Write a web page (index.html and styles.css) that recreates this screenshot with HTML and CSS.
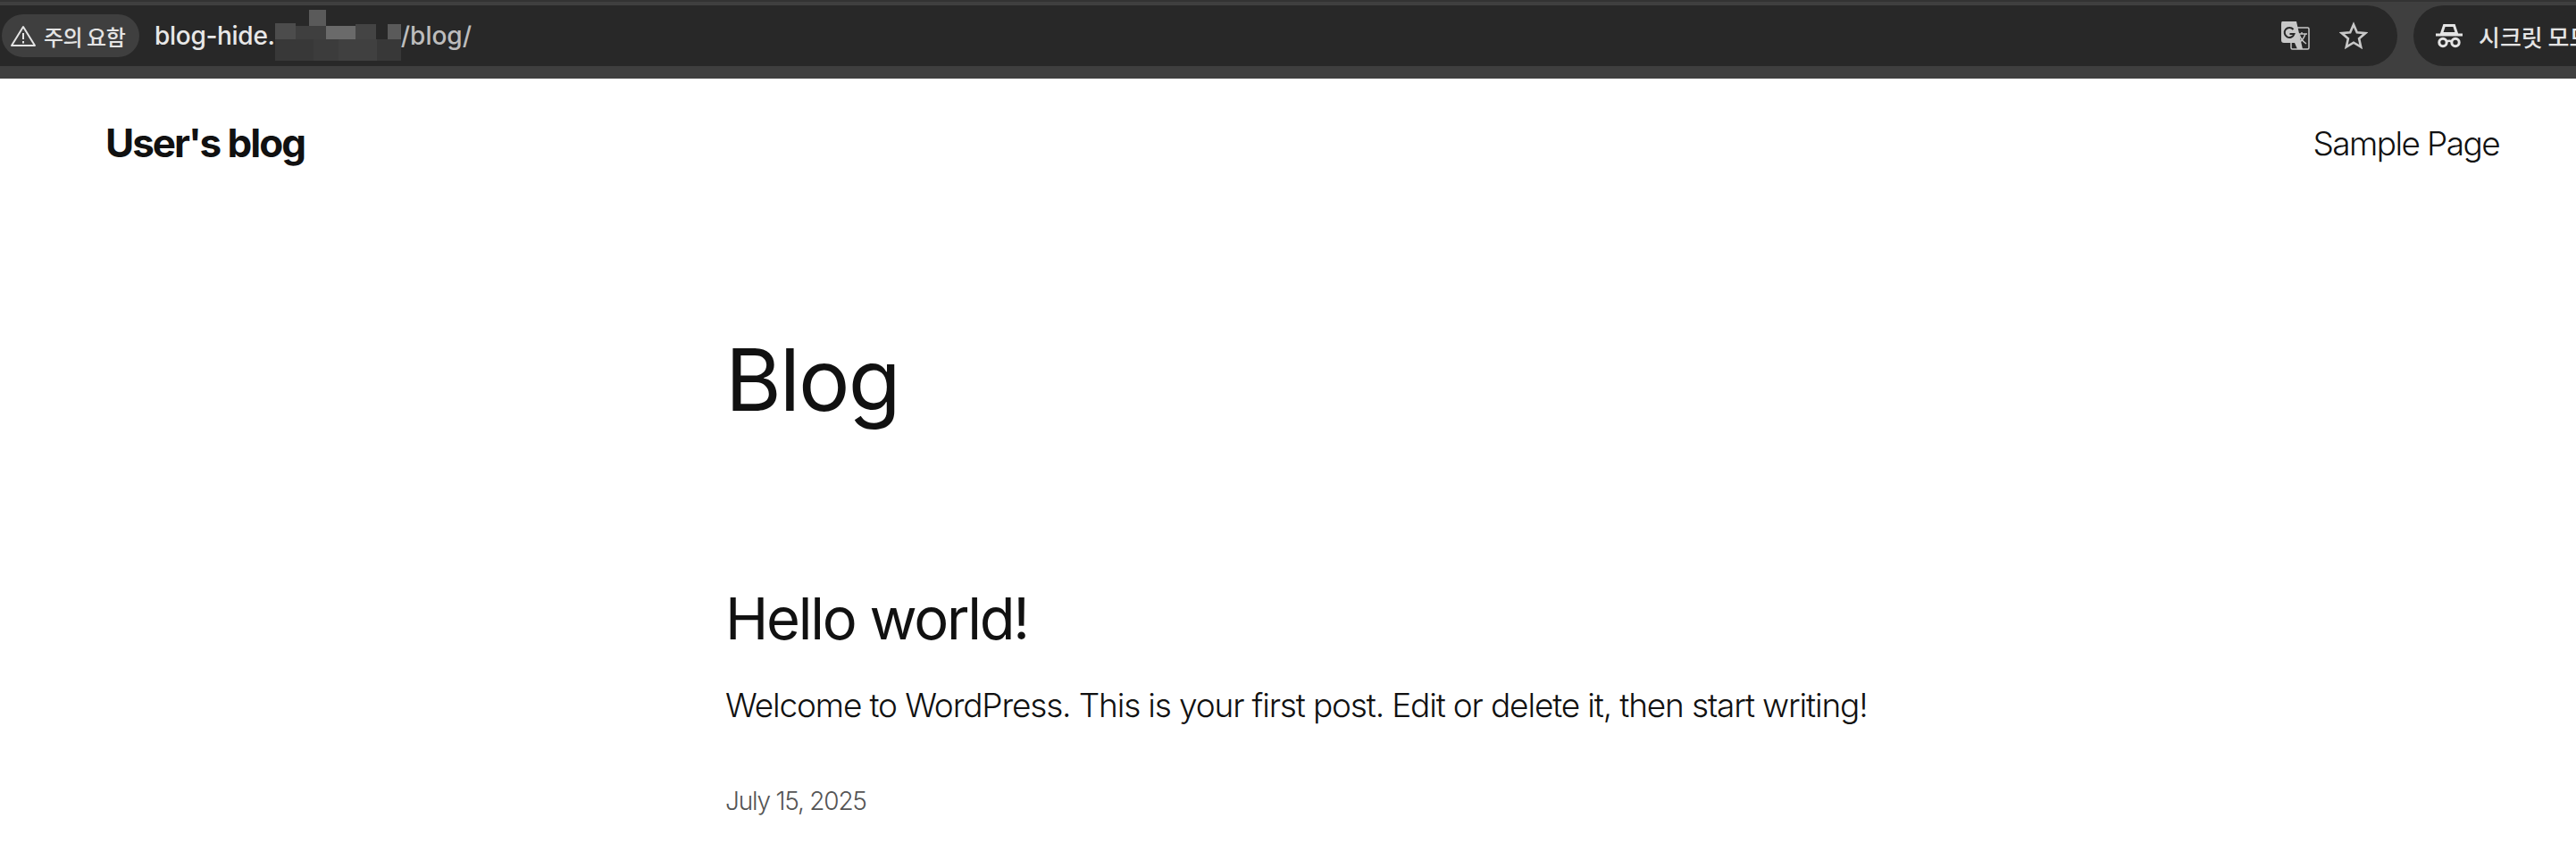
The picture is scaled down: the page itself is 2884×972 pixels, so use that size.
FILE: index.html
```html
<!DOCTYPE html>
<html lang="en">
<head>
<meta charset="utf-8">
<title>Blog</title>
<link rel="stylesheet" href="styles.css">
</head>
<body>
<div class="toolbar">
  <div class="omnibox">
    <div class="chip">
      <svg class="warn" viewBox="0 0 30 26" width="30" height="26"><path d="M15 3 L28 24 H2 Z" fill="none" stroke="#e4e4e4" stroke-width="2" stroke-linejoin="round"/><path d="M15 10v7M15 19v2.500" stroke="#e4e4e4" stroke-width="2"/></svg>
      <span class="chip-text">주의 요함</span>
    </div>
    <div class="url"><span class="host">blog-hide.</span><span class="mosaic"><i class="m m1"></i><i class="m m2"></i><i class="m m3"></i><i class="m m4"></i><i class="m m5"></i><i class="m m6"></i><i class="m m7"></i><i class="m m8"></i><i class="m m9"></i><i class="m m10"></i></span><span class="path">/blog/</span></div>
    <div class="omni-icons">
      <svg viewBox="0 0 34 34" width="34" height="34"><rect x="12" y="8" width="20" height="24" rx="1.500" fill="none" stroke="#c8c8c8" stroke-width="1.500"/><path d="M2 1 H18 L25 32 H19 L16 25 H4 Q1 25 1 22 V4 Q1 1 2 1Z" fill="#c8c8c8"/><path d="M14.500 10a5.500 5.500 0 1 0 1 5h-5" fill="none" stroke="#282828" stroke-width="2"/><path d="M19 15h11M24 13v2M21 15q2 7 8 11M28 15q-2 6-6 9" fill="none" stroke="#c8c8c8" stroke-width="1.400"/></svg>
      <svg viewBox="0 0 32 32" width="32" height="32"><path d="M16 3.500 L19.800 12.200 L29.300 13.100 L22.100 19.300 L24.200 28.600 L16 23.700 L7.800 28.600 L9.900 19.300 L2.700 13.100 L12.200 12.200 Z" fill="none" stroke="#c8c8c8" stroke-width="2.600" stroke-linejoin="miter"/></svg>
    </div>
  </div>
  <div class="incognito">
    <svg viewBox="0 0 30 28" width="30" height="28"><path d="M9.500 2.500h11l3 9h-17z" fill="none" stroke="#e4e4e4" stroke-width="3"/><path d="M0 13h30" stroke="#e4e4e4" stroke-width="3"/><circle cx="8" cy="21.500" r="4.200" fill="none" stroke="#e4e4e4" stroke-width="3"/><circle cx="22" cy="21.500" r="4.200" fill="none" stroke="#e4e4e4" stroke-width="3"/><path d="M12 20.500q3-1.500 6 0" fill="none" stroke="#e4e4e4" stroke-width="2.400"/></svg>
    <span class="incognito-text">시크릿 모드</span>
  </div>
</div>
<header class="site-header">
  <a class="site-title">User's blog</a>
  <a class="nav-link">Sample Page</a>
</header>
<main class="content">
  <h1 class="page-title">Blog</h1>
  <article class="post">
    <h2 class="post-title">Hello world!</h2>
    <p class="excerpt">Welcome to WordPress. This is your first post. Edit or delete it, then start writing!</p>
    <time class="date">July 15, 2025</time>
  </article>
</main>
</body>
</html>
```
FILE: styles.css
```css
* { box-sizing: border-box; }
html, body { margin: 0; padding: 0; background: #fff; overflow: hidden; }
body { width: 2884px; height: 972px; font-family: Inter, "Noto Sans CJK KR", sans-serif; color: #111; }

.toolbar { height: 88px; background: #3f3f3f; display: flex; gap: 18px; padding-top: 6px; padding-bottom: 14px; overflow: hidden; border-top: 2px solid #333; }
.omnibox { flex: 0 0 2684px; height: 68px; margin-top: -2px; background: #282828; border-radius: 0 34px 34px 0; display: flex; align-items: center; padding-left: 2px; padding-right: 33px; }
.chip { width: 154px; height: 48px; border-radius: 24px; background: #3f3f3f; display: flex; align-items: center; gap: 8px; padding-left: 9px; }
.warn { flex: none; }
.chip-text { font-size: 24px; font-weight: 500; color: #e4e4e4; font-family: "Noto Sans CJK KR", sans-serif; letter-spacing: -0.5px; white-space: nowrap; }
.url { margin-left: 17px; font-size: 28px; font-weight: 500; display: flex; align-items: center; white-space: nowrap; }
.host { color: #e8e8e8; letter-spacing: -0.300px; }
.path { color: #bdbdbd; }
.mosaic { position: relative; width: 141px; height: 58px; display: block; }
.m { position: absolute; display: block; }
.m1 { left: 38px; top: 0; width: 19px; height: 18px; background: #5a5a5a; }
.m2 { left: 0; top: 15px; width: 23px; height: 18px; background: #4c4c4c; }
.m3 { left: 23px; top: 18px; width: 34px; height: 15px; background: #3f3f3f; }
.m4 { left: 57px; top: 18px; width: 33px; height: 15px; background: #6a6a6a; }
.m5 { left: 90px; top: 16px; width: 23px; height: 17px; background: #444; }
.m6 { left: 126px; top: 16px; width: 15px; height: 17px; background: #5a5a5a; }
.m7 { left: 0; top: 33px; width: 43px; height: 24px; background: #383838; }
.m8 { left: 43px; top: 33px; width: 28px; height: 24px; background: #3c3c3c; }
.m9 { left: 71px; top: 33px; width: 43px; height: 24px; background: #404040; }
.m10 { left: 114px; top: 33px; width: 27px; height: 24px; background: #383838; }
.omni-icons { margin-left: auto; display: flex; align-items: center; gap: 32px; }
.incognito { flex: none; width: 400px; height: 68px; margin-top: -2px; background: #282828; border-radius: 34px 0 0 34px; display: flex; align-items: center; gap: 18px; padding-left: 25px; }
.incognito-text { font-size: 26px; font-weight: 500; color: #e4e4e4; font-family: "Noto Sans CJK KR", sans-serif; white-space: nowrap; }

.site-header { display: flex; justify-content: space-between; align-items: center; height: 76px; margin-top: 34px; padding: 0 86px 0 118px; }
.site-title { font-size: 44px; font-weight: 700; letter-spacing: -2px; }
.nav-link { font-size: 37px; font-weight: 300; letter-spacing: -1.600px; }

.content { padding-left: 812px; }
.page-title { margin: 169px 0 0; font-size: 96px; line-height: 116px; font-weight: 400; letter-spacing: -2px; }
.post { margin-top: 170px; }
.post-title { margin: 0; font-size: 65px; line-height: 80px; font-weight: 400; letter-spacing: -2.250px; }
.excerpt { margin: 27px 0 0; font-size: 37px; line-height: 60px; font-weight: 300; letter-spacing: -1.150px; white-space: nowrap; }
.date { display: block; margin-top: 57px; font-size: 28px; line-height: 40px; font-weight: 300; color: #555; letter-spacing: -1.200px; }
```
